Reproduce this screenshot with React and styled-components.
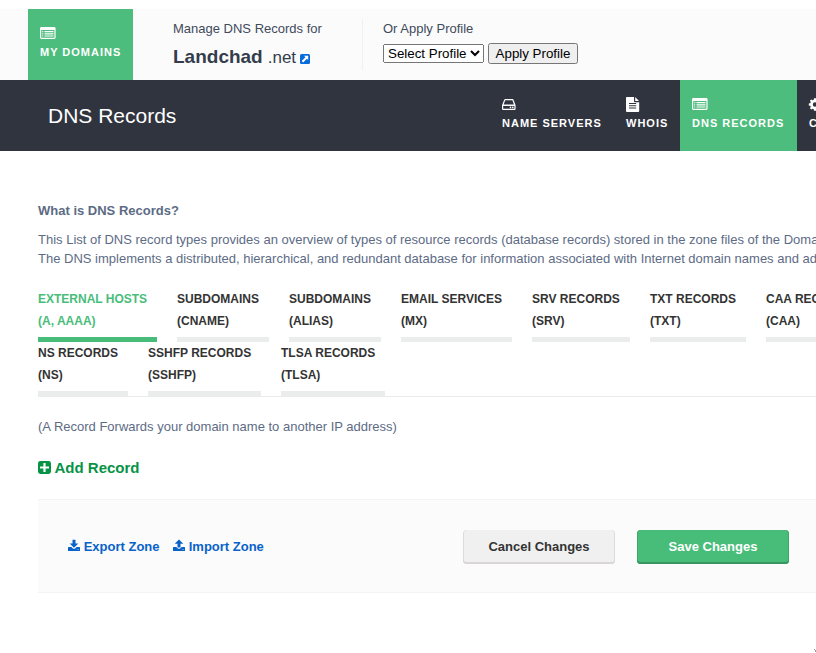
import React from "react";
import styled, { createGlobalStyle } from "styled-components";

const GlobalStyle = createGlobalStyle`
  *, *::before, *::after { box-sizing: border-box; }
  html, body { margin: 0; padding: 0; overflow: hidden; background: #fff; }
  body { font: 13px/19px "Liberation Sans", Arial, sans-serif; color: #5d6b85; }
  a { text-decoration: none; color: inherit; }
  h1, h2, p { margin: 0; }
`;

const Page = styled.div`
  position: relative;
  width: 816px;
  height: 653px;
  padding-top: 9px;
  overflow: hidden;
  display: flex;
  flex-direction: column;
`;

const DomainBar = styled.header`
  flex: none;
  height: 71px;
  display: flex;
  padding-left: 28px;
  background: #fbfbfb;
`;

const NavTile = styled.a`
  flex: none;
  width: ${(p) => p.$width}px;
  height: 71px;
  padding: 16px 0 0 12px;
  background: ${(p) => (p.$active ? "#4dbd7d" : "transparent")};
  color: #fff;
  font-size: 11px;
  font-weight: bold;
  letter-spacing: 1px;
  line-height: 22px;
  white-space: nowrap;
`;

const TileIcon = styled.svg`
  display: block;
  width: 16px;
  height: 16px;
  fill: currentColor;
  overflow: visible;
`;

const DomainInfo = styled.div`
  width: 190px;
  height: 51px;
  margin: 10px 0 0 40px;
  border-right: 1px solid #f0f0f0;
  color: #3f4a5b;
`;

const DomainName = styled.h1`
  margin-top: 7px;
  font-size: 17px;
  font-weight: normal;
  line-height: 24px;
  display: flex;
  align-items: baseline;
  color: #343d4c;
`;

const DomainLabel = styled.strong`
  font-size: 19px;
  margin-right: 5px;
`;

const ExternalIcon = styled.svg`
  width: 10px;
  height: 10px;
  margin: 3px 0 0 4px;
  align-self: center;
`;

const ProfileForm = styled.div`
  margin: 10px 0 0 20px;
  color: #3f4a5b;
`;

const ProfileControls = styled.div`
  display: flex;
  align-items: center;
  gap: 4px;
  margin-top: 5px;
`;

const ProfileSelect = styled.select`
  width: 101px;
  height: 19px;
  font: 13.333px "Liberation Sans", Arial, sans-serif;
`;

const ProfileButton = styled.button`
  width: 90px;
  height: 21px;
  padding: 1px 0;
  white-space: nowrap;
  font: 13.333px "Liberation Sans", Arial, sans-serif;
`;

const SectionBar = styled.nav`
  flex: none;
  height: 71px;
  display: flex;
  background: #30343f;
`;

const SectionTitle = styled.h2`
  flex: none;
  width: 490px;
  padding-left: 48px;
  color: #fff;
  font-size: 21px;
  font-weight: normal;
  line-height: 71px;
`;

const Content = styled.main`
  width: 1000px;
  margin: 50px 0 0 38px;
`;

const Intro = styled.section`
  white-space: nowrap;
`;

const IntroTitle = styled.p`
  font-weight: bold;
  margin-bottom: 10px;
`;

const TabList = styled.div`
  width: 800px;
  margin-top: 20px;
  display: flex;
  flex-wrap: wrap;
  column-gap: 20px;
  border-bottom: 1px solid #ebebeb;
`;

const Tab = styled.a`
  width: ${(p) => p.$width}px;
  height: 54px;
  border-bottom: 5px solid ${(p) => (p.$active ? "#48bd79" : "#ebecec")};
  color: ${(p) => (p.$active ? "#48bd79" : "#333")};
  font-size: 12px;
  font-weight: bold;
  line-height: 22px;
  white-space: nowrap;
`;

const TabHint = styled.p`
  margin-top: 20px;
`;

const AddRecord = styled.a`
  display: flex;
  align-items: center;
  gap: 3.5px;
  width: max-content;
  margin-top: 22px;
  color: #079346;
  font-size: 15px;
  font-weight: bold;
  line-height: 20px;
`;

const AddIcon = styled.svg`
  width: 13px;
  height: 13px;
  margin-bottom: 1px;
  fill: currentColor;
`;

const ActionBar = styled.footer`
  height: 94px;
  margin-top: 21px;
  padding: 0 0 0 30px;
  display: flex;
  align-items: center;
  background: #fbfbfb;
  border: solid #f3f3f3;
  border-width: 1px 0;
`;

const ZoneLinks = styled.div`
  width: 395px;
  display: flex;
  gap: 13.5px;
`;

const ZoneLink = styled.a`
  display: flex;
  align-items: center;
  gap: 3.7px;
  color: #0962c9;
  font-weight: bold;
`;

const ZoneIcon = styled.svg`
  width: 12px;
  height: 12px;
  margin-bottom: 2px;
  fill: currentColor;
`;

const ActionButton = styled.button`
  width: 152px;
  height: 34px;
  margin: 1px 22px 0 0;
  padding: 0;
  border: 0;
  border-radius: 4px;
  background: ${(p) => (p.$primary ? "#48bd79" : "#f0f0f0")};
  box-shadow: inset 0 -2px 0 ${(p) => (p.$primary ? "#3b9563" : "#dad6d8")},
    inset 1px 0 0 ${(p) => (p.$primary ? "#3fa56b" : "#dedbdd")},
    inset -1px 0 0 ${(p) => (p.$primary ? "#3fa56b" : "#dedbdd")};
  color: ${(p) => (p.$primary ? "#fff" : "#333")};
  font: bold 13px "Liberation Sans", Arial, sans-serif;
`;

const CornerGrip = styled.svg`
  position: absolute;
  right: 0;
  bottom: 0;
  width: 3px;
  height: 4px;
  fill: #999;
`;

const ListIcon = () => (
  <TileIcon viewBox="0 0 16 16">
    <path
      fillRule="evenodd"
      d="M1.400 2h12.800A1.400 1.400 0 0 1 15.600 3.400v9.200a1.400 1.400 0 0 1-1.400 1.400H1.400A1.400 1.400 0 0 1 0 12.600V3.400A1.400 1.400 0 0 1 1.400 2zM1.200 5.100v7.300q0 .4.400.4h12.400q.4 0 .4-.4V5.100z"
    />
    <path d="M2.200 6h1.100v1.200H2.200zM2.200 8.200h1.100v1.200H2.200zM2.200 10.400h1.100v1.200H2.200zM4.500 6h9v1.200h-9zM4.500 8.200h9v1.200h-9zM4.500 10.400h9v1.200h-9z" />
  </TileIcon>
);

const DriveIcon = () => (
  <TileIcon viewBox="0 0 16 16">
    <path
      fillRule="evenodd"
      d="M3.400 3h6.900q1 0 1.300.9l1.700 4.700q.3.700.3 1.500v2.700q0 1.200-1.200 1.200H1.200Q0 14 0 12.800v-2.700q0-.8.300-1.500L2.100 3.900Q2.400 3 3.400 3zM3.500 4.200q-.3 0-.4.300L1.700 8.600h10.200l-1.400-4.100q-.1-.3-.4-.3zM1.200 9.900v2.600q0 .3.300.3h10.600q.3 0 .3-.3V9.900z"
    />
    <circle cx="8.500" cy="11.400" r=".8" />
    <circle cx="10.800" cy="11.400" r=".8" />
  </TileIcon>
);

const FileIcon = () => (
  <TileIcon viewBox="0 0 16 16">
    <path
      fillRule="evenodd"
      d="M.8 1H8v4.300q0 .9.900.9h4.300v8.900q0 .9-.9.900H.9q-.9 0-.9-.9V1.800Q0 1 .8 1zM3 7v1.100h7.200V7zM3 9.200v1.100h7.200V9.200zM3 11.500v1.100h7.200v-1.100z"
    />
    <path d="M9.200 1.100 13 5H9.200z" />
  </TileIcon>
);

const CogIcon = () => (
  <TileIcon viewBox="-6 -8.500 16 16">
    <circle r="3.500" fill="none" stroke="currentColor" strokeWidth="2.600" />
    {[0, 45, 90, 135, 180, 225, 270, 315].map((angle) => (
      <path key={angle} d="M-1.400-4.200-1-6.200h2l.4 2z" transform={`rotate(${angle})`} />
    ))}
  </TileIcon>
);

const sections = [
  { label: "NAME SERVERS", width: 124, Icon: DriveIcon },
  { label: "WHOIS", width: 66, Icon: FileIcon },
  { label: "DNS RECORDS", width: 117, Icon: ListIcon, active: true },
  { label: "CONTACTS", width: 110, Icon: CogIcon },
];

const tabs = [
  ["EXTERNAL HOSTS", "(A, AAAA)", 119, true],
  ["SUBDOMAINS", "(CNAME)", 92],
  ["SUBDOMAINS", "(ALIAS)", 92],
  ["EMAIL SERVICES", "(MX)", 111],
  ["SRV RECORDS", "(SRV)", 98],
  ["TXT RECORDS", "(TXT)", 96],
  ["CAA RECORDS", "(CAA)", 72],
  ["NS RECORDS", "(NS)", 90],
  ["SSHFP RECORDS", "(SSHFP)", 113],
  ["TLSA RECORDS", "(TLSA)", 104],
];

const TRAY =
  "M.4 8h2.900l1.600 1.400q1.100.8 2.200 0L8.700 8h2.900q.4 0 .4.400v3q0 .6-.5.600H.5q-.5 0-.5-.6v-3Q0 8 .4 8zM8.800 10.400v.6h.7v-.6zM10.300 10.400v.6h.7v-.6z";

export default function App() {
  return (
    <Page>
      <GlobalStyle />
      <DomainBar>
        <NavTile href="#" $width={105} $active>
          <ListIcon />
          MY DOMAINS
        </NavTile>
        <DomainInfo>
          <p>Manage DNS Records for</p>
          <DomainName>
            <DomainLabel>Landchad</DomainLabel>.net
            <ExternalIcon viewBox="0 0 10 10">
              <rect width="10" height="10" rx="1.500" fill="#066bdc" />
              <path d="M4 1.800h4.200V6L6.900 4.700 3.200 8.400 1.700 6.900l3.700-3.700z" fill="#fff" />
            </ExternalIcon>
          </DomainName>
        </DomainInfo>
        <ProfileForm>
          <p>Or Apply Profile</p>
          <ProfileControls>
            <ProfileSelect>
              <option>Select Profile</option>
            </ProfileSelect>
            <ProfileButton>Apply Profile</ProfileButton>
          </ProfileControls>
        </ProfileForm>
      </DomainBar>
      <SectionBar>
        <SectionTitle>DNS Records</SectionTitle>
        {sections.map(({ label, width, Icon, active }) => (
          <NavTile key={label} href="#" $width={width} $active={active}>
            <Icon />
            {label}
          </NavTile>
        ))}
      </SectionBar>
      <Content>
        <Intro>
          <IntroTitle>What is DNS Records?</IntroTitle>
          <p>
            This List of DNS record types provides an overview of types of resource records (database records) stored in
            the zone files of the Domain Name System (DNS).
          </p>
          <p>
            The DNS implements a distributed, hierarchical, and redundant database for information associated with
            Internet domain names and addresses.
          </p>
        </Intro>
        <TabList>
          {tabs.map(([title, type, width, active]) => (
            <Tab key={title + type} href="#" $width={width} $active={active}>
              {title}
              <br />
              {type}
            </Tab>
          ))}
        </TabList>
        <TabHint>(A Record Forwards your domain name to another IP address)</TabHint>
        <AddRecord href="#">
          <AddIcon viewBox="0 0 13 13">
            <path
              fillRule="evenodd"
              d="M2.400 0h8.200A2.400 2.400 0 0 1 13 2.400v8.200a2.400 2.400 0 0 1-2.400 2.400H2.400A2.400 2.400 0 0 1 0 10.600V2.400A2.400 2.400 0 0 1 2.400 0zM5.400 2v3.400H2v2.200h3.400V11h2.200V7.600H11V5.400H7.600V2z"
            />
          </AddIcon>
          Add Record
        </AddRecord>
        <ActionBar>
          <ZoneLinks>
            <ZoneLink href="#">
              <ZoneIcon viewBox="0 0 12 12">
                <path fillRule="evenodd" d={TRAY} />
                <path d="M4.500.8h3v3.700h2.800L6 8.700 1.700 4.500h2.800z" />
              </ZoneIcon>
              Export Zone
            </ZoneLink>
            <ZoneLink href="#">
              <ZoneIcon viewBox="0 0 12 12">
                <path fillRule="evenodd" d={TRAY} />
                <path d="M4.500 8.400h3V4.700h2.800L6 .5 1.700 4.700h2.800z" />
              </ZoneIcon>
              Import Zone
            </ZoneLink>
          </ZoneLinks>
          <ActionButton>Cancel Changes</ActionButton>
          <ActionButton $primary>Save Changes</ActionButton>
        </ActionBar>
      </Content>
      <CornerGrip viewBox="0 0 3 4">
        <path d="M1 0h1v1H1zM2 1h1v2H2z" />
      </CornerGrip>
    </Page>
  );
}
